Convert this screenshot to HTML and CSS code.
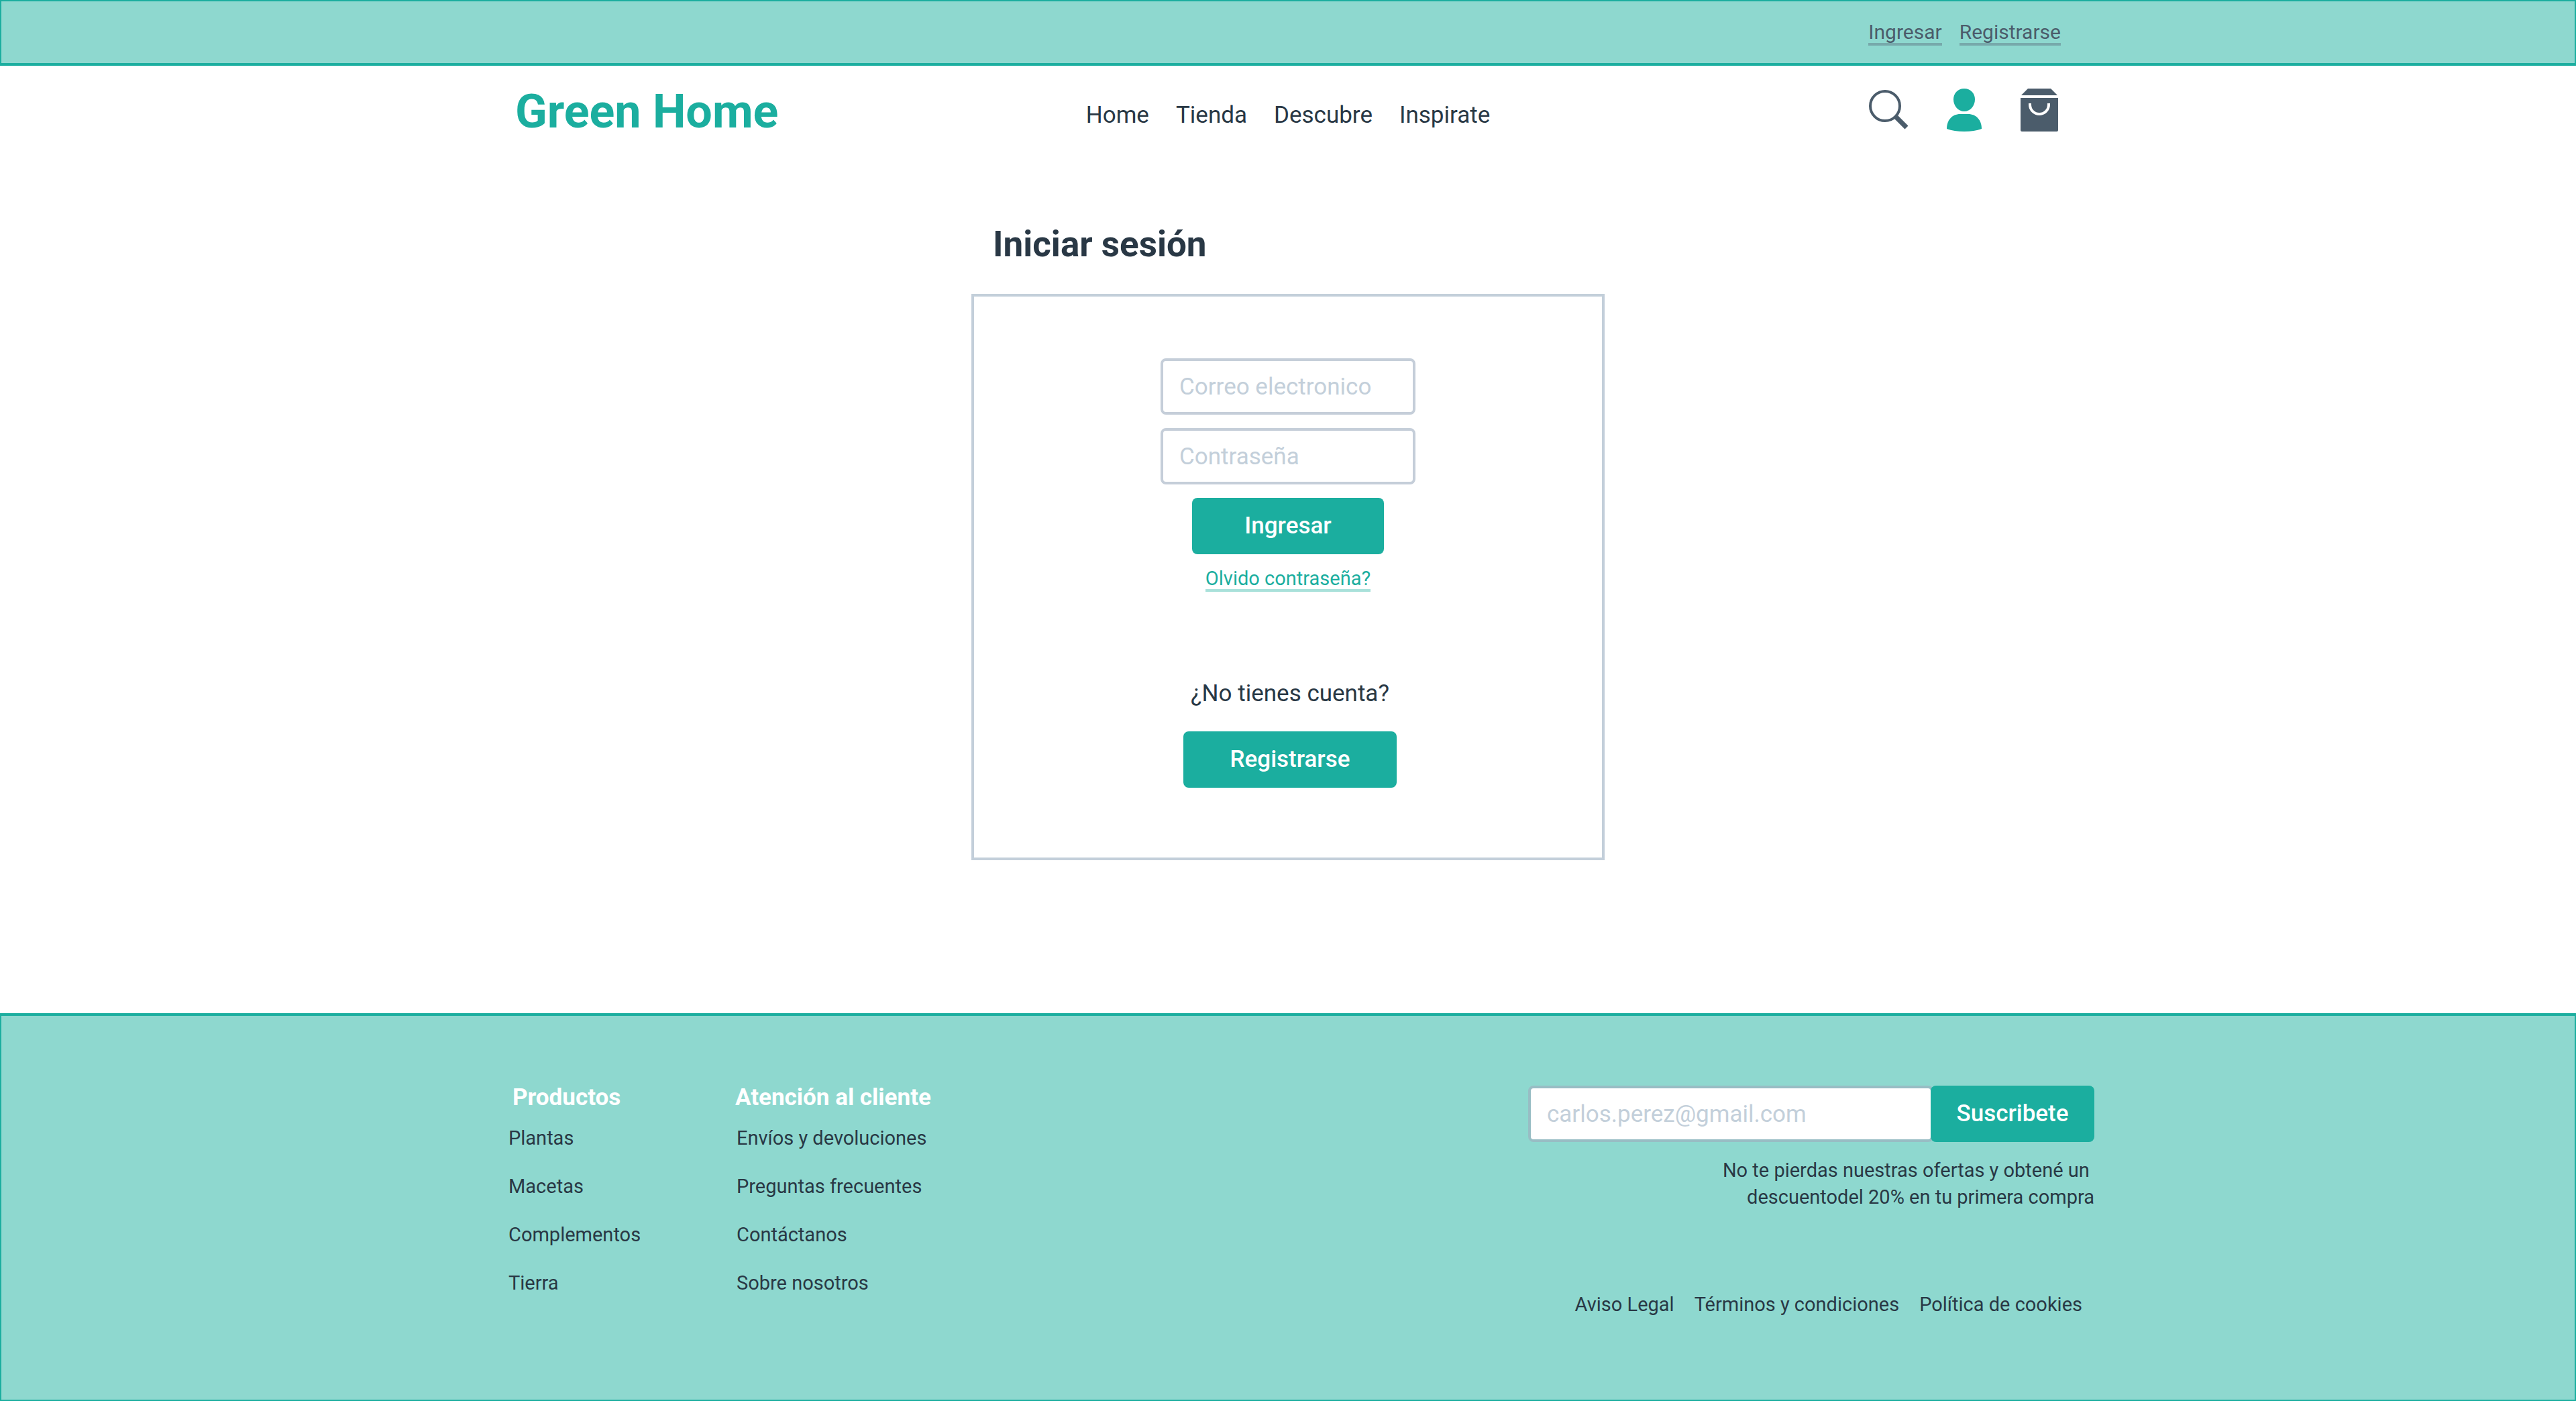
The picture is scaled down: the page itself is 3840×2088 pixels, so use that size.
FILE: index.html
```html
<!DOCTYPE html>
<html lang="es">
<head>
<meta charset="utf-8">
<meta name="viewport" content="width=device-width, initial-scale=1">
<title>Green Home – Iniciar sesión</title>
<link rel="stylesheet" href="styles.css">
</head>
<body>
<div class="topbar">
  <div class="container topbar-links">
    <a class="text-link text-link-muted" href="#ingresar">Ingresar</a>
    <a class="text-link text-link-muted" href="#registro">Registrarse</a>
  </div>
</div>

<header class="container header">
  <a class="logo" href="#home">Green Home</a>
  <nav class="nav" aria-label="Principal">
    <a href="#home">Home</a>
    <a href="#tienda">Tienda</a>
    <a href="#descubre">Descubre</a>
    <a href="#inspirate">Inspirate</a>
  </nav>
  <div class="actions">
    <button class="icon-button" type="button" aria-label="Buscar">
      <svg width="64" height="64" viewBox="0 0 64 64" aria-hidden="true">
        <circle cx="30" cy="26" r="22" fill="none" stroke="currentColor" stroke-width="4"/>
        <path d="M45 41 62 58" fill="none" stroke="currentColor" stroke-width="7"/>
      </svg>
    </button>
    <button class="icon-button icon-button-active" type="button" aria-label="Mi cuenta">
      <svg width="52" height="64" viewBox="0 0 52 64" aria-hidden="true">
        <path d="M26 0c9.500 0 16 7 16 16 0 10-7 18-16 18S10 26 10 16C10 7 16.500 0 26 0Z" fill="currentColor"/>
        <path d="M20 38h12c12 0 20 9 20 22-7 2.500-16 4-26 4S7 62.500 0 60C0 47 8 38 20 38Z" fill="currentColor"/>
      </svg>
    </button>
    <button class="icon-button" type="button" aria-label="Carrito">
      <svg width="56" height="64" viewBox="0 0 56 64" aria-hidden="true">
        <path d="M11 0h34l10 10H1Z" fill="currentColor"/>
        <path d="M0 14h56v48a2 2 0 0 1-2 2H2a2 2 0 0 1-2-2Z" fill="currentColor"/>
        <path d="M14 22v2a14 14 0 0 0 28 0v-2" fill="none" stroke="#fff" stroke-width="4"/>
      </svg>
    </button>
  </div>
</header>

<main class="main">
  <div class="login">
    <h1 class="login-title">Iniciar sesión</h1>
    <div class="card">
      <form class="login-form">
        <input class="field" type="email" placeholder="Correo electronico" aria-label="Correo electronico">
        <input class="field" type="password" placeholder="Contraseña" aria-label="Contraseña">
        <button class="button button-login" type="submit">Ingresar</button>
        <a class="text-link text-link-accent" href="#recuperar">Olvido contraseña?</a>
      </form>
      <div class="register">
        <p class="register-question">¿No tienes cuenta?</p>
        <button class="button button-register" type="button">Registrarse</button>
      </div>
    </div>
  </div>
</main>

<footer class="footer">
  <div class="footer-inner">
    <div class="footer-columns">
      <section>
        <h2 class="footer-title footer-title-indent">Productos</h2>
        <ul class="footer-list">
          <li><a href="#plantas">Plantas</a></li>
          <li><a href="#macetas">Macetas</a></li>
          <li><a href="#complementos">Complementos</a></li>
          <li><a href="#tierra">Tierra</a></li>
        </ul>
      </section>
      <section>
        <h2 class="footer-title">Atención al cliente</h2>
        <ul class="footer-list">
          <li><a href="#envios">Envíos y devoluciones</a></li>
          <li><a href="#preguntas">Preguntas frecuentes</a></li>
          <li><a href="#contacto">Contáctanos</a></li>
          <li><a href="#nosotros">Sobre nosotros</a></li>
        </ul>
      </section>
    </div>
    <div class="footer-side">
      <form class="newsletter">
        <input class="field newsletter-field" type="email" placeholder="carlos.perez@gmail.com" aria-label="Correo para suscribirte">
        <button class="button newsletter-button" type="submit">Suscribete</button>
      </form>
      <p class="newsletter-text">No te pierdas nuestras ofertas y obtené un&nbsp;<br>descuentodel 20% en tu primera compra</p>
      <nav class="legal" aria-label="Legal">
        <a href="#aviso">Aviso Legal</a>
        <a href="#terminos">Términos y condiciones</a>
        <a href="#cookies">Política de cookies</a>
      </nav>
    </div>
  </div>
</footer>
</body>
</html>
```
FILE: styles.css
```css
:root {
  --teal: #1bae9f;
  --mint: #8ed8cf;
  --ink: #293845;
  --slate: #4b5c6b;
  --line: #c3cfda;
}

* {
  box-sizing: border-box;
}

body {
  display: flex;
  flex-direction: column;
  min-height: 100vh;
  margin: 0;
  background: #fff;
  color: var(--ink);
  font: 400 29px/36px Roboto, "Liberation Sans", sans-serif;
}

a {
  color: inherit;
  text-decoration: none;
}

h1, h2, p, ul {
  margin: 0;
  padding: 0;
}

button, input {
  font: inherit;
}

.container {
  width: 100%;
  max-width: 2304px;
  margin: 0 auto;
}

/* Top bar */
.topbar {
  padding: 30px 0 26px;
  background: var(--mint);
  border: 2px solid var(--teal);
  border-bottom-width: 4px;
}

.topbar-links {
  display: flex;
  justify-content: flex-end;
  gap: 26px;
  font-size: 30px;
}

.text-link {
  line-height: 32px;
  border-bottom: 4px solid;
}

.text-link-muted {
  color: var(--slate);
  border-color: #77a9ab;
}

.text-link-accent {
  color: var(--teal);
  border-color: #a9e1da;
}

/* Header */
.header {
  display: grid;
  grid-template-columns: 1fr auto 1fr;
  align-items: center;
  min-height: 132px;
}

.logo {
  padding-top: 4px;
  color: var(--teal);
  font-size: 70px;
  line-height: 80px;
  font-weight: 700;
}

.nav {
  display: flex;
  gap: 40px;
  padding-top: 16px;
  font-size: 35px;
  line-height: 40px;
}

.actions {
  display: flex;
  justify-content: flex-end;
  gap: 58px;
  padding-right: 4px;
}

.icon-button {
  display: flex;
  padding: 0;
  border: 0;
  background: none;
  color: var(--slate);
}

.icon-button-active {
  color: var(--teal);
}

/* Login */
.main {
  flex: 1;
  padding: 104px 0 228px;
}

.login {
  width: 100%;
  max-width: 944px;
  margin: 0 auto;
}

.login-title {
  padding-left: 32px;
  margin-bottom: 44px;
  font-size: 53px;
  line-height: 60px;
  font-weight: 700;
}

.card {
  display: flex;
  flex-direction: column;
  gap: 132px;
  padding: 92px 0 104px;
  border: 4px solid var(--line);
}

.login-form {
  display: flex;
  flex-direction: column;
  align-items: center;
  gap: 20px;
}

.field {
  width: 380px;
  height: 84px;
  padding: 0 24px;
  background: #fff;
  border: 4px solid #c5ced9;
  border-radius: 8px;
  color: var(--ink);
  font-size: 35px;
}

.field::placeholder {
  color: var(--line);
  opacity: 1;
}

.button {
  height: 84px;
  padding: 0;
  border: 0;
  border-radius: 8px;
  background: var(--teal);
  color: #fff;
  font-size: 35px;
  font-weight: 500;
}

.button-login {
  width: 286px;
}

.register {
  display: flex;
  flex-direction: column;
  align-items: center;
  gap: 36px;
  padding-left: 6px;
}

.register-question {
  font-size: 35px;
  line-height: 40px;
}

.button-register {
  width: 318px;
}

/* Footer */
.footer {
  padding: 104px 0 124px;
  background: var(--mint);
  border: 2px solid var(--teal);
  border-top-width: 4px;
}

.footer-inner {
  display: flex;
  justify-content: space-between;
  width: 100%;
  max-width: 2404px;
  margin: 0 auto;
  padding-left: 38px;
}

.footer-columns {
  display: grid;
  grid-template-columns: 340px auto;
}

.footer-title {
  margin-bottom: 24px;
  color: #fff;
  font-size: 35px;
  line-height: 36px;
  font-weight: 700;
}

.footer-title-indent {
  padding-left: 8px;
}

.footer-list {
  display: flex;
  flex-direction: column;
  gap: 36px;
  padding-left: 2px;
  list-style: none;
}

.footer-side {
  display: flex;
  flex-direction: column;
  align-items: flex-end;
}

.newsletter {
  display: flex;
  margin-bottom: 22px;
}

.newsletter-field {
  width: 604px;
  margin-right: -4px;
  border-color: #98bdc4;
}

.newsletter-button {
  position: relative;
  width: 244px;
}

.newsletter-text {
  margin-bottom: 122px;
  line-height: 40px;
  text-align: right;
}

.legal {
  display: flex;
  gap: 30px;
  padding-right: 18px;
}
```
